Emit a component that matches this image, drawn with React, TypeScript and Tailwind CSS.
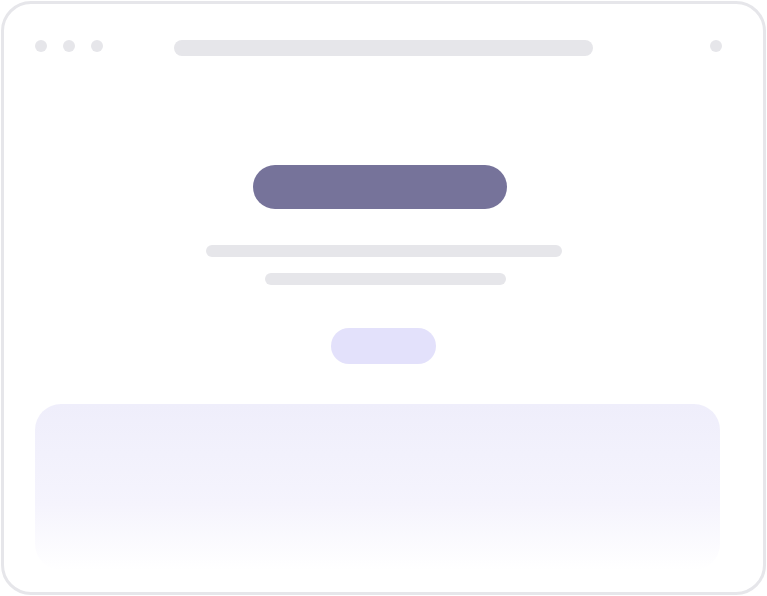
export default function App() {
  return (
    <div className="w-[767px] h-[596px] bg-white p-px">
      <div className="h-[594px] rounded-[30px] border-[3px] border-[#e6e6ea] bg-white flex flex-col items-start">
        {/* browser chrome */}
        <div className="mt-[36px] ml-[31px] flex items-start">
          <div className="flex gap-4">
            <span className="w-3 h-3 rounded-full bg-[#e6e6ea]" />
            <span className="w-3 h-3 rounded-full bg-[#e6e6ea]" />
            <span className="w-3 h-3 rounded-full bg-[#e6e6ea]" />
          </div>
          <div className="ml-[71px] w-[419px] h-4 rounded-full bg-[#e6e6ea]" />
          <span className="ml-[117px] w-3 h-3 rounded-full bg-[#e6e6ea]" />
        </div>

        {/* hero */}
        <div className="mt-[109px] ml-[249px] w-[254px] h-[44px] rounded-full bg-[#76739a]" />
        <div className="mt-[36px] ml-[202px] w-[356px] h-3 rounded-full bg-[#e6e6ea]" />
        <div className="mt-4 ml-[261px] w-[241px] h-3 rounded-full bg-[#e6e6ea]" />
        <div className="mt-[43px] ml-[327px] w-[105px] h-9 rounded-full bg-[#e3e1fb]" />

        {/* content card */}
        <div className="mt-[40px] ml-[31px] w-[685px] h-[166px] rounded-[26px] bg-gradient-to-b from-[#efeefb] via-[#f5f4fd] via-60% to-white" />
      </div>
    </div>
  )
}
